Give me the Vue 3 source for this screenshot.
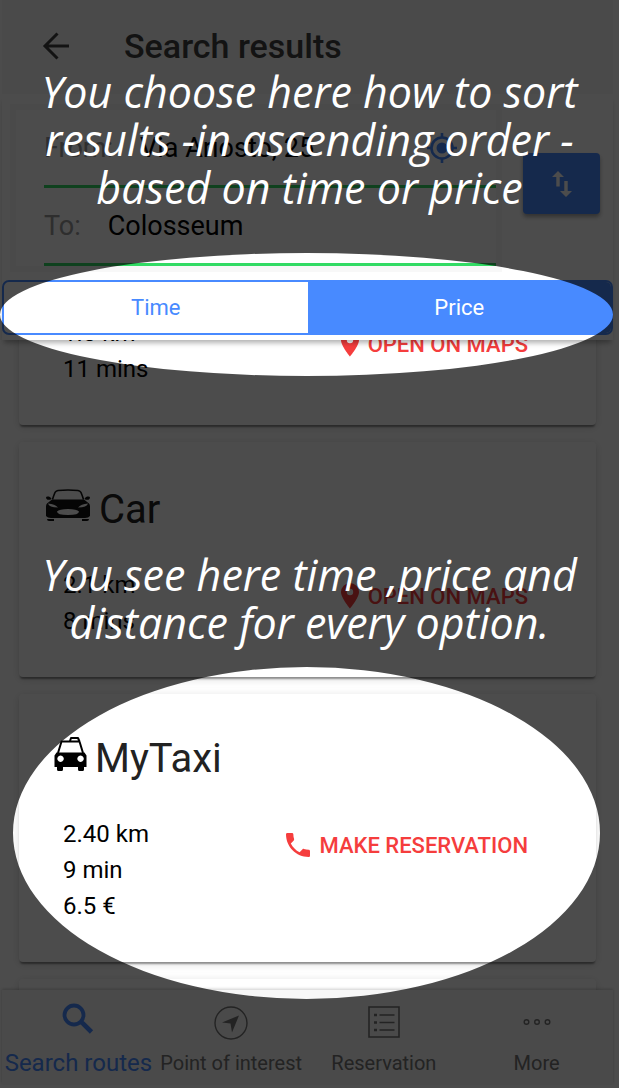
<script setup>
import { ref } from 'vue'

const from = ref('Via Ariosto, 25')
const to = ref('Colosseum')
const sortBy = ref('Price')
const sorts = ['Time', 'Price']

const options = [
  { id: 'walk', name: 'Walk', facts: ['1.0 km', '11 mins'], action: 'OPEN ON MAPS', icon: 'pin' },
  { id: 'car', name: 'Car', facts: ['2.1 km', '8 mins'], action: 'OPEN ON MAPS', icon: 'pin' },
  { id: 'taxi', name: 'MyTaxi', facts: ['2.40 km', '9 min', '6.5 €'], action: 'MAKE RESERVATION', icon: 'phone' },
]

const tabs = [
  { id: 'search', label: 'Search routes' },
  { id: 'poi', label: 'Point of interest' },
  { id: 'list', label: 'Reservation' },
  { id: 'more', label: 'More' },
]
</script>

<template>
  <div class="screen">
    <div class="app">
      <header class="titlebar">
        <button class="back" aria-label="Back">
          <svg width="28" height="28" viewBox="0 0 28 28" fill="none" stroke="#424242" stroke-width="3">
            <path d="M27 14H3M15.500 1.500 3 14l12.500 12.500" />
          </svg>
        </button>
        <h1>Search results</h1>
      </header>

      <div class="toolbar">
        <form class="route" @submit.prevent>
          <div class="fields">
            <div class="field">
              <label for="from">From:</label>
              <input id="from" v-model="from" type="text" />
              <button type="button" class="locate" aria-label="Use my location">
                <svg width="30" height="30" viewBox="0 0 30 30" fill="none" stroke="#488aff" stroke-width="2.600">
                  <circle cx="15" cy="15" r="10.500" />
                  <circle cx="15" cy="15" r="5.500" fill="#488aff" stroke="none" />
                  <path d="M15 0v5M15 25v5M0 15h5M25 15h5" />
                </svg>
              </button>
            </div>
            <div class="field">
              <label for="to">To:</label>
              <input id="to" v-model="to" type="text" />
            </div>
          </div>
          <button type="button" class="swap" aria-label="Swap origin and destination">
            <svg width="20" height="26" viewBox="0 0 20 26" fill="#fff">
              <path d="M6 0 0 6h4.300v9.500h3.400V6H12zM14 26l6-6h-4.300v-10h-3.400v10H8z" />
            </svg>
          </button>
        </form>
        <div class="segment" role="group" aria-label="Sort by">
          <button
            v-for="s in sorts"
            :key="s"
            :class="{ active: sortBy === s }"
            :aria-pressed="sortBy === s"
            @click="sortBy = s"
          >{{ s }}</button>
        </div>
      </div>

      <main class="results">
        <article v-for="o in options" :key="o.id" class="card" :class="o.id">
          <h2>
            <svg v-if="o.id === 'car'" width="44" height="32" viewBox="0 0 44 32">
              <path d="M6.500 10.500C9 2.500 9.500 2 12 1.500q10-1 20 0c2.500.5 3 1 5.500 9" fill="none" stroke="#111" stroke-width="1.600" />
              <path d="M0 8.500q0-1.500 3-1l2.500 1.800-1 1.400H1.500Q0 10 0 8.500zM44 8.500q0-1.500-3-1l-2.500 1.800 1 1.400h3Q44 10 44 8.500z" fill="#111" />
              <path fill-rule="evenodd" d="M6 10.500h32l5 4q1 1 1 3V27q-1.500 2-5 2H5q-3.500 0-5-2v-9.500q0-2 1-3zM2 14.500q1 4 10 4Q9 15 2 14.500zM42 14.500q-1 4-10 4 3-3.500 10-4zM11 22.500q0 3.500 11 3.500t11-3.500Q31 20 22 20t-11 2.500z" fill="#111" />
              <path d="M1 30h7v2H3q-2 0-2-2zM43 30h-7v2h5q2 0 2-2z" fill="#111" />
            </svg>
            <svg v-else-if="o.id === 'taxi'" width="33" height="34" viewBox="0 0 33 34">
              <path d="M4 16 7.500 4.500H25.500L29 16M16 4l1-3h7l1.500 3.500" fill="none" stroke="#000" stroke-width="2" stroke-linejoin="round" />
              <path fill-rule="evenodd" d="M2.500 15.500h28l2 3V30H30v2.500q0 1.500-1.500 1.500h-3q-1.500 0-1.500-1.500V30H9v2.500Q9 34 7.500 34h-3Q3 34 3 32.500V30H.5V18.500zM6.500 18.500a3.200 3.200 0 1 0 .1 0zM26.500 18.500a3.200 3.200 0 1 0 .1 0z" />
            </svg>
            <span>{{ o.name }}</span>
          </h2>
          <div class="detail">
            <ul>
              <li v-for="f in o.facts" :key="f">{{ f }}</li>
            </ul>
            <button class="action">
              <svg v-if="o.icon === 'pin'" width="18" height="26" viewBox="0 0 18 26">
                <path fill-rule="evenodd" d="M9 0a9 9 0 0 0-9 9c0 6 9 16.500 9 16.500S18 15 18 9a9 9 0 0 0-9-9zm0 5.800a3.200 3.200 0 1 1 0 6.400 3.200 3.200 0 0 1 0-6.400z" fill="#f53d3d" />
              </svg>
              <svg v-else width="24" height="24" viewBox="3 3 18 18">
                <path d="M6.620 10.790c1.440 2.830 3.760 5.140 6.590 6.590l2.200-2.200c.27-.27.67-.36 1.020-.24 1.120.37 2.330.57 3.570.57.550 0 1 .45 1 1V20c0 .55-.45 1-1 1C10.610 21 3 13.390 3 4c0-.55.45-1 1-1h3.500c.55 0 1 .45 1 1 0 1.250.2 2.450.57 3.570.11.350.03.740-.25 1.020z" fill="#f53d3d" />
              </svg>
              {{ o.action }}
            </button>
          </div>
        </article>
        <article class="card next"></article>
      </main>

      <nav class="tabs">
        <a v-for="(t, i) in tabs" :key="t.id" href="#" :class="{ current: i === 0 }">
          <svg v-if="t.id === 'search'" width="32" height="32" viewBox="0 0 32 32" fill="none" stroke="#488aff">
            <circle cx="12" cy="12" r="9.500" stroke-width="3.800" />
            <path d="m19 19 2 1.500 8.500 8.500" stroke-width="4.600" />
          </svg>
          <svg v-else-if="t.id === 'poi'" width="34" height="34" viewBox="0 0 34 34">
            <circle cx="17" cy="17" r="16" fill="none" stroke="#757575" stroke-width="1.400" />
            <path d="M25 9.500 8 16.500l8.500 1L18 26.500z" fill="#757575" />
          </svg>
          <svg v-else-if="t.id === 'list'" width="32" height="32" viewBox="0 0 32 32" fill="none" stroke="#757575" stroke-width="1.600">
            <path d="M1 1h30v30H1zM11.500 9h15M11.500 16.500h15M11.500 24h15" />
            <path d="M6 9h3M6 16.500h3M6 24h3" stroke-width="2.600" />
          </svg>
          <svg v-else width="28" height="32" viewBox="0 0 28 32" fill="none" stroke="#757575" stroke-width="1.400">
            <circle cx="3.500" cy="16" r="2.300" /><circle cx="14" cy="16" r="2.300" /><circle cx="24.500" cy="16" r="2.300" />
          </svg>
          <span>{{ t.label }}</span>
        </a>
      </nav>
    </div>

    <div class="guide">
      <svg class="shade" viewBox="0 0 619 1088" preserveAspectRatio="none" aria-hidden="true">
        <path
          fill="#000" fill-opacity="0.700" fill-rule="evenodd"
          d="M0 0H619V1088H0zM0 314.500a306.500 61.500 0 0 0 613 0a306.500 61.500 0 0 0-613 0zM13 833a293.500 166 0 0 0 587 0a293.500 166 0 0 0-587 0z"
        />
      </svg>
      <p class="hint sort-hint">You choose here how to sort<br />results -in ascending order -<br />based on time or price</p>
      <p class="hint option-hint">You see here time ,price and<br />distance for every option.</p>
    </div>
  </div>
</template>

<style>
body {
  margin: 0;
  background: #fff;
}
</style>

<style scoped>
.screen {
  position: relative;
  height: 100vh;
  box-sizing: border-box;
  padding: 0 6px 4px 2px;
  overflow: hidden;
  font-family: Roboto, "Liberation Sans", sans-serif;
  color: #000;
}
.app {
  height: 100%;
  display: flex;
  flex-direction: column;
}
button,
input {
  font: inherit;
  border: 0;
  padding: 0;
  margin: 0;
  background: none;
  color: inherit;
}
svg {
  display: block;
  flex: none;
}
.titlebar {
  flex: none;
  display: flex;
  align-items: center;
  gap: 54px;
  height: 92px;
  padding: 0 0 2px 40px;
  background: #f8f8f8;
}
h1 {
  margin: 0;
  font-size: 34px;
  line-height: 40px;
  font-weight: 500;
  color: #424242;
}
.toolbar {
  position: relative;
  flex: none;
  padding: 10px 0 5px;
  background: #fff;
  box-shadow: 0 5px 5px -2px rgba(0, 0, 0, 0.3);
}
.route {
  display: flex;
  align-items: flex-start;
  gap: 21px;
  padding: 0 13px 8px 8px;
}
.fields {
  flex: 1;
  min-width: 0;
  border: 6px solid #f8f8f8;
  padding-left: 28px;
}
.field {
  display: flex;
  align-items: center;
  gap: 27px;
  height: 75px;
  border-bottom: 3px solid #32db64;
  font-size: 27px;
}
.field label {
  color: #999;
}
.field input {
  flex: 1;
  min-width: 0;
}
.locate {
  margin-right: 39px;
}
.swap {
  display: grid;
  place-items: center;
  width: 77px;
  height: 61px;
  margin-top: 49px;
  border-radius: 4px;
  background: #488aff;
  box-shadow: 0 3px 4px rgba(0, 0, 0, 0.35);
}
.segment {
  display: flex;
  height: 55px;
  box-sizing: border-box;
  border: 2px solid #488aff;
  border-radius: 7px;
  overflow: hidden;
}
.segment button {
  flex: 1;
  font-size: 22px;
  color: #488aff;
}
.segment .active {
  background: #488aff;
  color: #fff;
}
.results {
  flex: 1;
  min-height: 0;
  overflow: hidden;
  padding: 0 17px;
}
.card {
  box-sizing: border-box;
  margin-bottom: 17px;
  padding: 44px 68px 38px 44px;
  border-radius: 4px;
  background: #fff;
  box-shadow: 0 3px 2px -1px rgba(0, 0, 0, 0.4), 0 2px 10px rgba(0, 0, 0, 0.14);
}
.walk {
  margin-top: -150px;
}
.taxi {
  padding-top: 41px;
}
.next {
  height: 235px;
}
h2 {
  display: flex;
  align-items: center;
  gap: 9px;
  height: 48px;
  margin: 0 0 33px -17px;
  font-size: 40px;
  line-height: 48px;
  font-weight: 400;
  color: #222;
}
.taxi h2 {
  gap: 8px;
  margin-left: -9px;
}
h2 svg {
  margin-bottom: 10px;
}
.detail {
  display: flex;
  justify-content: space-between;
  align-items: flex-start;
}
ul {
  list-style: none;
  margin: 0;
  padding: 0;
  font-size: 24px;
  line-height: 36px;
}
.action {
  display: flex;
  align-items: center;
  gap: 9px;
  height: 58px;
  font-size: 22px;
  font-weight: 500;
  color: #f53d3d;
}
.tabs {
  position: relative;
  flex: none;
  display: flex;
  height: 94px;
  background: #f7f7f7;
  box-shadow: 0 -1px 3px rgba(0, 0, 0, 0.2);
}
.tabs a {
  flex: 1 1 0;
  min-width: 0;
  display: flex;
  flex-direction: column;
  align-items: center;
  justify-content: space-between;
  box-sizing: border-box;
  padding: 16px 0 7px;
  font-size: 20px;
  line-height: 28px;
  white-space: nowrap;
  color: #757575;
  text-decoration: none;
}
.tabs .current {
  padding-top: 13px;
  font-size: 24px;
  color: #488aff;
}
.guide {
  position: absolute;
  inset: 0;
  pointer-events: none;
}
.shade {
  width: 100%;
  height: 100%;
}
.hint {
  position: absolute;
  left: 0;
  right: 0;
  margin: 0;
  font-family: "Open Sans", "Noto Sans", sans-serif;
  font-style: italic;
  font-size: 43px;
  font-weight: 500;
  line-height: 48px;
  text-align: center;
  white-space: nowrap;
  color: #fff;
}
.sort-hint {
  top: 68px;
}
.option-hint {
  top: 551px;
}
</style>
